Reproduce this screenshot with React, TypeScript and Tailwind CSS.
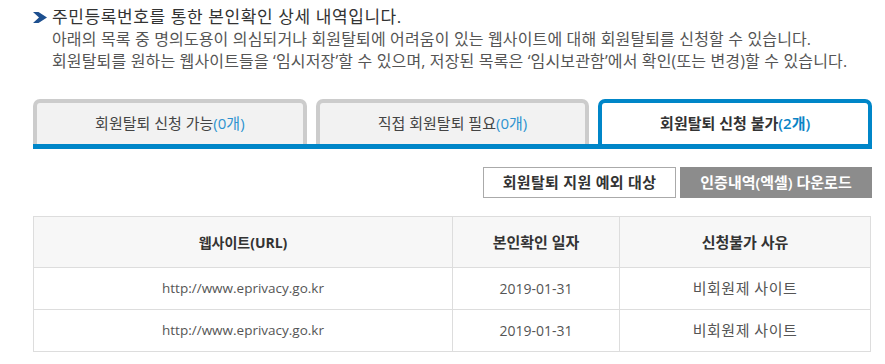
const tabs = [
  { label: "회원탈퇴 신청 가능", count: "0개", active: false },
  { label: "직접 회원탈퇴 필요", count: "0개", active: false },
  { label: "회원탈퇴 신청 불가", count: "2개", active: true },
];

const rows = [
  { url: "http://www.eprivacy.go.kr", date: "2019-01-31", reason: "비회원제 사이트" },
  { url: "http://www.eprivacy.go.kr", date: "2019-01-31", reason: "비회원제 사이트" },
];

export default function App() {
  return (
    <div
      className="w-[885px] bg-white pl-[33px] pr-[13px] pt-[6px] pb-[12px]"
      style={{ fontFamily: '"Open Sans", "Noto Sans CJK KR", sans-serif' }}
    >
      {/* Intro */}
      <div className="flex items-center gap-[5px] text-[17px] leading-[22px] tracking-[0.6px] text-[#333]">
        <svg width="14" height="11" viewBox="0 0 14 11" aria-hidden="true">
          <polygon points="0,0 5.5,0 14,5.5 5.5,11 0,11 6,5.5" fill="#1d4f8f" />
        </svg>
        <span>주민등록번호를 통한 본인확인 상세 내역입니다.</span>
      </div>
      <div className="pl-[19px] text-[16px] leading-[22px] tracking-[0.15px] text-[#555]">
        <p>아래의 목록 중 명의도용이 의심되거나 회원탈퇴에 어려움이 있는 웹사이트에 대해 회원탈퇴를 신청할 수 있습니다.</p>
        <p>회원탈퇴를 원하는 웹사이트들을 ‘임시저장’할 수 있으며, 저장된 목록은 ‘임시보관함’에서 확인(또는 변경)할 수 있습니다.</p>
      </div>

      {/* Tabs */}
      <div className="mt-[27px] flex gap-[9px]">
        {tabs.map((t) => (
          <div
            key={t.label}
            className={
              t.active
                ? "flex h-[45px] flex-1 items-center justify-center rounded-t-[7px] border-4 border-b-0 border-[#0086c8] bg-white text-[15px] font-semibold text-[#333]"
                : "flex h-[45px] flex-1 items-center justify-center rounded-t-[7px] border-4 border-b-0 border-[#cccccc] bg-[#f2f2f2] text-[15px] text-[#444]"
            }
          >
            {t.label}
            <span className={t.active ? "text-[#0a84c6]" : "text-[#2d92d0]"}>({t.count})</span>
          </div>
        ))}
      </div>
      <div className="h-[5px] bg-[#0086c8]" />

      {/* Actions */}
      <div className="mt-[18px] flex justify-end gap-[4px]">
        <button className="h-[31px] w-[193px] border border-[#aaaaaa] bg-white text-[15px] font-semibold tracking-[0.3px] text-[#333]">
          회원탈퇴 지원 예외 대상
        </button>
        <button className="h-[31px] w-[192px] bg-[#8c8c8c] text-[15px] font-semibold text-white">
          인증내역(엑셀) 다운로드
        </button>
      </div>

      {/* Table */}
      <table className="mt-[18px] w-[838px] border-collapse text-center">
        <thead>
          <tr className="h-[51px] bg-[#f7f7f7] text-[#333]">
            <th className="w-[419px] border border-[#dddddd] text-[14px] font-bold">웹사이트(URL)</th>
            <th className="w-[167px] border border-[#dddddd] text-[15px] font-bold">본인확인 일자</th>
            <th className="border border-[#dddddd] text-[15px] font-bold">신청불가 사유</th>
          </tr>
        </thead>
        <tbody className="text-[#555]">
          {rows.map((r, i) => (
            <tr key={i} className="h-[42px]">
              <td className="border border-[#dddddd] text-[13.5px]">{r.url}</td>
              <td className="border border-[#dddddd] text-[14px]">{r.date}</td>
              <td className="border border-[#dddddd] text-[15px] tracking-[0.5px]">{r.reason}</td>
            </tr>
          ))}
        </tbody>
      </table>
    </div>
  );
}
